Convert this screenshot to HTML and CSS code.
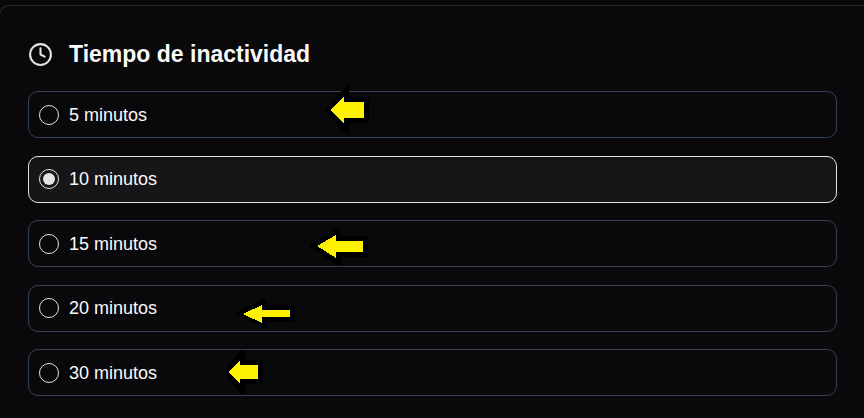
FILE: index.html
```html
<!DOCTYPE html>
<html lang="es">
<head>
<meta charset="utf-8">
<meta name="viewport" content="width=device-width, initial-scale=1">
<title>Tiempo de inactividad</title>
<link rel="stylesheet" href="styles.css">
</head>
<body>
<main class="card">
  <header class="card-header">
    <svg class="clock" viewBox="0 0 24 24" aria-hidden="true">
      <circle cx="12" cy="12" r="10"/>
      <path d="M12 6v6l4 2"/>
    </svg>
    <h1 class="title" id="title">Tiempo de inactividad</h1>
  </header>
  <div class="options" role="radiogroup" aria-labelledby="title">
    <label class="option"><input class="radio" type="radio" name="idle" value="5"><span>5 minutos</span></label>
    <label class="option"><input class="radio" type="radio" name="idle" value="10" checked><span>10 minutos</span></label>
    <label class="option"><input class="radio" type="radio" name="idle" value="15"><span>15 minutos</span></label>
    <label class="option"><input class="radio" type="radio" name="idle" value="20"><span>20 minutos</span></label>
    <label class="option"><input class="radio" type="radio" name="idle" value="30"><span>30 minutos</span></label>
  </div>
</main>
<svg class="arrows" width="864" height="418" viewBox="0 0 864 418" aria-hidden="true">
  <g class="arrow-edge">
    <path d="M325 110L341 91L346 86H349V97H368L369 98V122L368 123H349V134H346L341 129Z"/>
    <path d="M309 246L337 228H341V236H367L368 237V256L367 257H341V265H337Z"/>
    <path d="M234 314L263 299H267V305H294L295 306V321L294 322H267V328H263Z"/>
    <path d="M223 372L241 350H245V360H262L263 361V383L262 384H245V394H241Z"/>
  </g>
  <g class="arrow-fill">
    <path d="M331 110L344 96V102H364V118H344V124Z"/>
    <path d="M317 246L336 235V241H363V252H336V258Z"/>
    <path d="M243 314L262 305V310H290V317H262V323Z"/>
    <path d="M228 372L240 360V365H258V379H240V384Z"/>
  </g>
</svg>
</body>
</html>
```
FILE: styles.css
```css
*,
*::before {
  box-sizing: border-box;
}

body {
  margin: 0;
  padding-top: 5px;
  min-height: 100vh;
  display: flex;
  overflow: hidden;
  background: #09090b;
  color: #fafafa;
  font-family: "Liberation Sans", Arial, sans-serif;
}

.card {
  flex: 1;
  display: flex;
  flex-direction: column;
  gap: 21px;
  margin: 0 -12px 0 -1px;
  padding: 32px 38px 22px 28px;
  border: 1px solid #27272a;
  border-bottom: 0;
  border-radius: 10px 10px 0 0;
}

.card-header {
  display: flex;
  align-items: center;
  gap: 16px;
}

.clock {
  width: 25px;
  height: 25px;
  fill: none;
  stroke: #e4e4e7;
  stroke-width: 2;
  stroke-linecap: round;
  stroke-linejoin: round;
}

.title {
  margin: 0;
  font-size: 23px;
  line-height: 32px;
  font-weight: 700;
}

.options {
  flex: 1;
  display: flex;
  flex-direction: column;
  justify-content: space-between;
}

.option {
  display: flex;
  align-items: center;
  gap: 10px;
  height: 47px;
  padding: 0 10px;
  border: 1px solid #334155;
  border-radius: 10px;
  font-size: 18px;
  line-height: 24px;
}

.option:has(:checked) {
  border-color: #e4e4e7;
  background: #161618;
}

.radio {
  appearance: none;
  display: grid;
  place-items: center;
  width: 20px;
  height: 20px;
  margin: 0;
  border: 1px solid #e4e4e7;
  border-radius: 50%;
}

.radio:checked::before {
  content: "";
  width: 12px;
  height: 12px;
  border-radius: 50%;
  background: #e4e4e7;
}

.arrows {
  position: absolute;
  top: 0;
  left: 0;
  pointer-events: none;
  shape-rendering: crispEdges;
}

.arrow-edge {
  fill: #000;
}

.arrow-fill {
  fill: #fff200;
}
```
